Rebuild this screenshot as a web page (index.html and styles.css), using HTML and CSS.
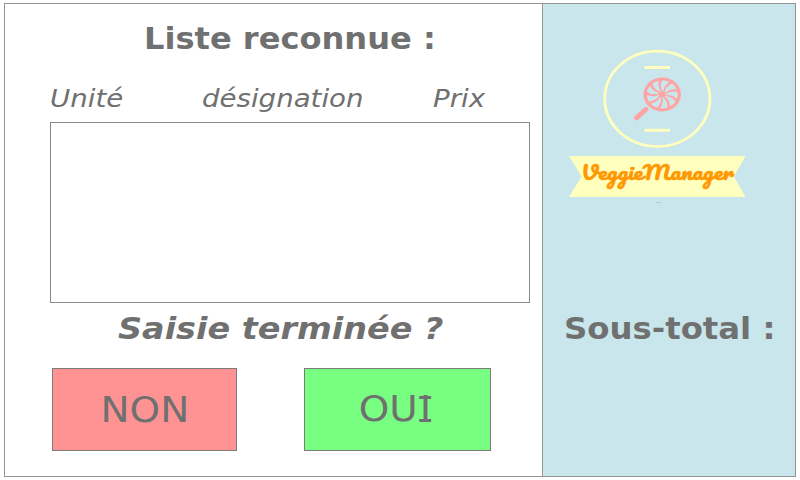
FILE: index.html
```html
<!DOCTYPE html>
<html lang="fr">
<head>
<meta charset="utf-8">
<title>VeggieManager</title>
<link rel="stylesheet" href="styles.css">
</head>
<body>
<div class="frame">
  <main class="list-panel">
    <h1 class="title"><span class="wide">Liste reconnue :</span></h1>
    <div class="columns">
      <span class="wide">Unité</span>
      <span class="wide">désignation</span>
      <span class="wide">Prix</span>
    </div>
    <div class="items"></div>
    <h2 class="question"><span class="wide">Saisie terminée ?</span></h2>
    <div class="actions">
      <button class="btn btn-no"><span class="wide">NON</span></button>
      <button class="btn btn-yes"><span class="wide">OU<span class="serif-i">I</span></span></button>
    </div>
  </main>
  <aside class="side-panel">
    <svg class="logo" width="180" height="160" viewBox="567 46 180 160">
      <ellipse cx="657.3" cy="98.8" rx="52.6" ry="47.7" fill="none" stroke="#ffffbe" stroke-width="2.8"/>
      <path d="M644.5 67.5H670M644.5 130.3H670" stroke="#ffffbe" stroke-width="3"/>
      <g transform="translate(662.2 94.4) scale(1.1 1)">
        <circle r="17" fill="#ffa3a3"/>
        <g fill="#c8e6eb">
          <path id="seg" d="M1 -2.2C-1.8 -6 -1.8 -10 0 -14.1Q4 -14 6.7 -12.3C2.6 -9.6 1.3 -6 1 -2.2Z"/>
          <use href="#seg" transform="rotate(40)"/>
          <use href="#seg" transform="rotate(80)"/>
          <use href="#seg" transform="rotate(120)"/>
          <use href="#seg" transform="rotate(160)"/>
          <use href="#seg" transform="rotate(200)"/>
          <use href="#seg" transform="rotate(240)"/>
          <use href="#seg" transform="rotate(280)"/>
          <use href="#seg" transform="rotate(320)"/>
        </g>
      </g>
      <path d="M646 109.2L636.4 118" stroke="#ffa3a3" stroke-width="4.8" stroke-linecap="round"/>
      <path d="M569 156H745.5L734 176.5L745.5 197H569L581.5 176.5Z" fill="#ffffbe"/>
      <text class="brand" x="581" y="180.3" textLength="153" lengthAdjust="spacingAndGlyphs">VeggieManager</text>
      <path d="M656 202.5H661" stroke="#a3cdee" stroke-width="1"/>
    </svg>
    <h2 class="subtotal"><span class="wide">Sous-total :</span></h2>
  </aside>
</div>
</body>
</html>
```
FILE: styles.css
```css
* { box-sizing: border-box; }

body {
  margin: 0;
  padding: 3px 4px;
  background: #fff;
  color: #707070;
  font-family: Verdana, "DejaVu Sans", sans-serif;
}

h1, h2 { margin: 0; white-space: nowrap; }

.frame {
  display: grid;
  grid-template-columns: 538px 1fr;
  height: 474px;
  border: 1px solid #929292;
}

.list-panel { border-right: 1px solid #999; padding-left: 45px; }

/* Lettering is drawn about 10% wider than its natural width. */
.wide { display: inline-block; transform: scaleX(1.1); transform-origin: left; }

.title { height: 74px; padding: 18px 0 0 93.5px; font-size: 29.5px; line-height: 34px; }
.title .wide { transform: scaleX(1.088); }

.columns {
  display: grid;
  grid-template-columns: 152px 231px auto;
  height: 44px;
  padding-top: 6px;
  font-size: 25.3px;
  font-style: italic;
  line-height: 30px;
}
.columns .wide { transform: scaleX(1.092); }

.items { width: 480px; height: 181px; border: 1px solid #898989; }

.question { height: 65px; padding: 9px 0 0 68px; font-size: 30.5px; font-style: italic; line-height: 34px; }
.question .wide { transform: scaleX(1.096); }

.actions { display: flex; gap: 67px; padding-left: 2px; }

.btn {
  width: 185px;
  height: 83px;
  padding: 1px 0 0;
  border: 1px solid #7b7b7b;
  color: #707070;
  font: 36px/42px Verdana, "DejaVu Sans", sans-serif;
}

.btn .wide { transform-origin: center; }
.btn-no { background: #ff9393; }
.btn-no .wide { transform: translateX(0.8px) scaleX(1.08); }
.btn-yes { width: 187px; padding: 0 0 2px; background: #78ff82; }
.btn-yes .wide { transform: translateX(-1.5px) scaleX(1.08); }

/* Capital I with top and bottom bars. */
.serif-i {
  display: inline-block;
  width: 14px;
  text-align: center;
  background:
    linear-gradient(#707070, #707070) center 8px / 11px 3px no-repeat,
    linear-gradient(#707070, #707070) center 31px / 11px 3px no-repeat;
}

.side-panel { background: #c8e6eb; }
.logo { display: block; overflow: visible; margin: 42px 0 0 24px; }
.subtotal { padding: 106px 0 0 21px; font-size: 29.5px; line-height: 34px; }
.subtotal .wide { transform: scaleX(1.096); }

.brand {
  fill: #ff9800;
  stroke: #ff9800;
  stroke-width: 0.6;
  font: 19.5px Pacifico, "Liberation Serif", serif;
}
```
